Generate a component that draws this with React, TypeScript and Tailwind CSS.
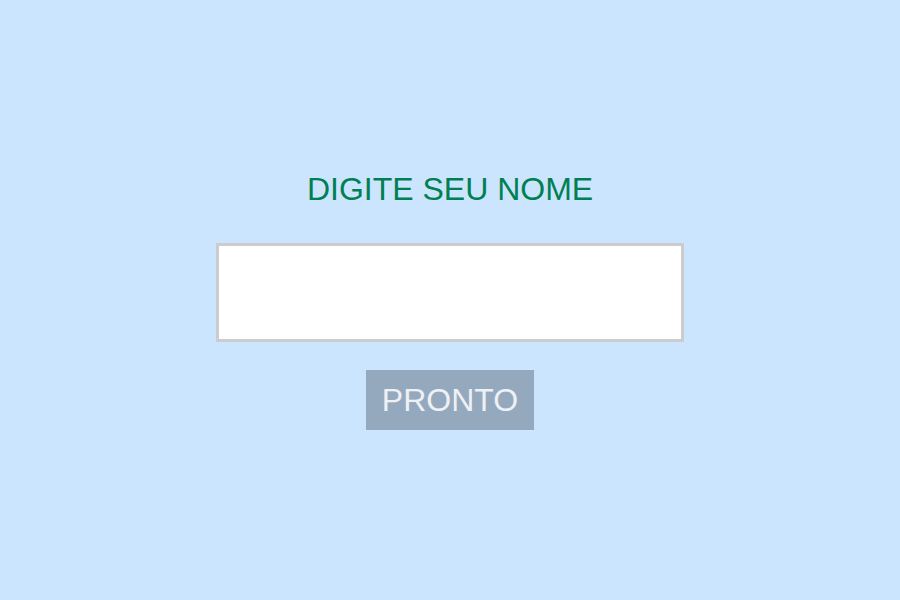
import { useState } from 'react';

const App = () => {
  const [name, setName] = useState('');

  return (
    <div className="w-full h-screen bg-[#cce5ff] flex flex-col items-center justify-center pt-px font-['Liberation_Sans',Arial,sans-serif]">
      <h1 className="text-[32px] leading-[37px] text-[#008052]">DIGITE SEU NOME</h1>

      <input
        value={name}
        onChange={(e) => setName(e.target.value)}
        className="mt-[35px] w-[468px] h-[99px] bg-white border-[3px] border-[#cccccc] outline-none px-3 text-[28px]"
      />

      <button className="mt-[28px] h-[60px] w-[168px] bg-[#94a9bd] text-[#eef0f5] text-[32px]">
        PRONTO
      </button>
    </div>
  );
};

export default App;
